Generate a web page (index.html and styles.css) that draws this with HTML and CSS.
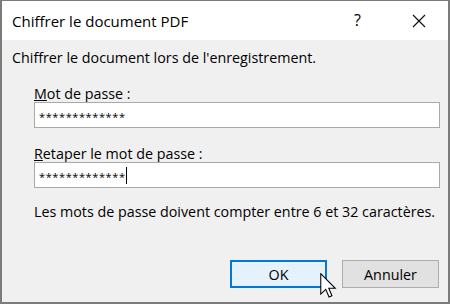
FILE: index.html
```html
<!DOCTYPE html>
<html lang="fr">
<head>
<meta charset="utf-8">
<title>Chiffrer le document PDF</title>
<link rel="stylesheet" href="styles.css">
</head>
<body>
<div class="window">
  <div class="titlebar">
    <span class="title">Chiffrer le document PDF</span>
    <span class="help">?</span>
    <span class="close">
      <svg width="14" height="14" viewBox="0 0 14 14"><path d="M1 1 L13 13 M13 1 L1 13" stroke="#111" stroke-width="1.2" fill="none"/></svg>
    </span>
  </div>
  <div class="content">
    <p class="intro">Chiffrer le document lors de l'enregistrement.</p>
    <div class="fields">
      <label class="label"><u>M</u>ot de passe :</label>
      <div class="input"><span class="stars">*************</span></div>
      <label class="label second"><u>R</u>etaper le mot de passe :</label>
      <div class="input"><span class="stars">*************</span><span class="caret"></span></div>
      <p class="hint">Les mots de passe doivent compter entre 6 et 32 caractères.</p>
    </div>
    <div class="buttons">
      <button class="btn primary">OK</button>
      <button class="btn">Annuler</button>
    </div>
    <svg class="cursor" width="18" height="25" viewBox="0 0 12 19">
      <path d="M0.5 0.5 L0.5 16 L4.3 12.4 L6.8 18.2 L9 17.3 L6.6 11.6 L11.5 11.6 Z" fill="#fff" stroke="#000" stroke-width="0.8" stroke-linejoin="miter"/>
    </svg>
  </div>
</div>
</body>
</html>
```

FILE: styles.css
```css
html, body {
  margin: 0;
  padding: 0;
}
body {
  font-family: "Open Sans", "Noto Sans", sans-serif;
  color: #000;
}
.window {
  width: 450px;
  height: 304px;
  box-sizing: border-box;
  border: 2px solid #7b7b7b;
  border-top-width: 1px;
  display: flex;
  flex-direction: column;
  background: #f0f0f0;
}
.titlebar {
  height: 39px;
  background: #fff;
  display: flex;
  align-items: center;
  padding-left: 10px;
  flex: none;
}
.title {
  font-size: 15px;
  flex: 1;
  padding-top: 1px;
}
.help {
  font-size: 16px;
  width: 14px;
  margin-right: 44px;
  padding-bottom: 1px;
}
.close {
  width: 14px;
  height: 14px;
  margin-right: 22px;
  display: flex;
}
.content {
  flex: 1;
  position: relative;
  padding: 9px 8px 0 10px;
  font-size: 14.3px;
}
.intro {
  margin: 0;
  line-height: 17px;
}
.fields {
  padding-left: 22px;
  padding-top: 19px;
  display: flex;
  flex-direction: column;
}
.label {
  line-height: 17px;
  margin-bottom: 0;
}
.label.second {
  margin-top: 17px;
}
.input {
  height: 26px;
  box-sizing: border-box;
  border: 1px solid #a9a9a9;
  background: #fff;
  display: flex;
  align-items: center;
  padding-left: 4px;
}
.stars {
  font-size: 11px;
  letter-spacing: 0.6px;
  padding-top: 3px;
}
.caret {
  width: 1px;
  height: 17px;
  background: #000;
  margin-left: 0;
}
.hint {
  margin: 15px 0 0;
  line-height: 17px;
}
.buttons {
  display: flex;
  justify-content: flex-end;
  gap: 15px;
  margin-top: 40px;
  padding-right: 1px;
}
.btn {
  width: 97px;
  height: 28px;
  box-sizing: border-box;
  border: 1px solid #adadad;
  background: #e1e1e1;
  font-family: inherit;
  font-size: 14.3px;
  color: #000;
  padding: 0;
}
.btn.primary {
  border: 2px solid #0078d7;
  background: #e5f1fb;
}
.cursor {
  position: absolute;
  left: 317px;
  top: 233px;
}
```
